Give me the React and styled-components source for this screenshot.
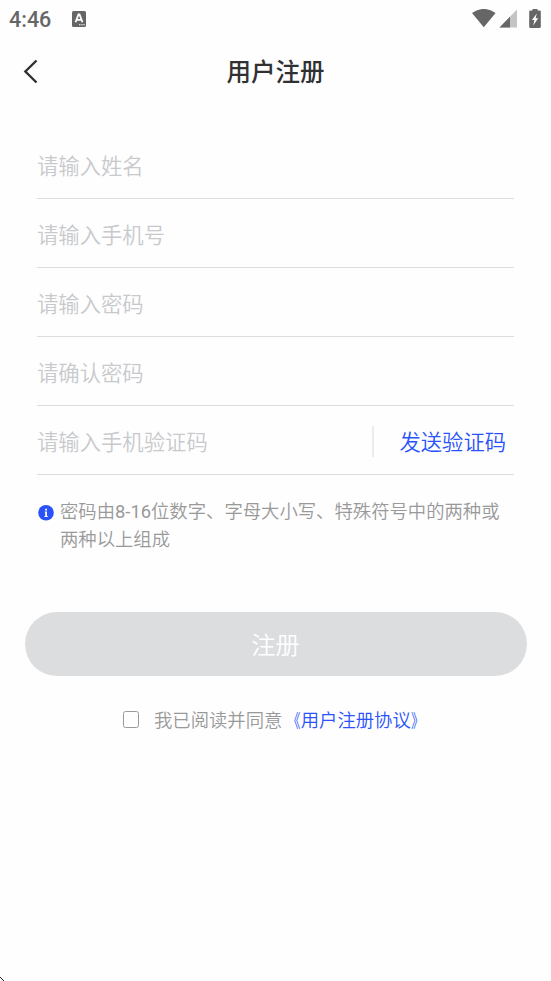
import React, { useState } from "react";
import styled, { createGlobalStyle } from "styled-components";

const Global = createGlobalStyle`
  * { box-sizing: border-box; }
  body {
    margin: 0;
    background: #fefefe;
    font-family: Roboto, "Noto Sans CJK SC", sans-serif;
    font-weight: 350;
  }
  button, input { font: inherit; border: 0; padding: 0; background: none; }
`;

const Screen = styled.main`
  position: relative;
  display: flex;
  flex-direction: column;
  height: 981px;
  width: 551px;
  overflow: hidden;
`;

const StatusBar = styled.header`
  display: flex;
  align-items: center;
  height: 37px;
  padding: 0 10px 0 9px;
  color: #666;
`;

const Clock = styled.time`
  width: 63px;
  font-size: 21.5px;
  font-weight: 500;
  line-height: 37px;
  padding-top: 1px;
`;

const StatusIcons = styled.div`
  display: flex;
  margin-left: auto;
`;

const Icon = styled.svg`
  display: block;
  flex: none;
`;

const NavBar = styled.nav`
  display: grid;
  grid-template-columns: 60px 1fr 60px;
  align-items: center;
  height: 69px;
`;

const BackButton = styled.button`
  padding-left: 22px;
`;

const Title = styled.h1`
  margin: 0;
  padding-top: 3px;
  text-align: center;
  font-size: 24.5px;
  line-height: 36px;
  font-weight: 500;
  color: #303133;
`;

const Form = styled.form`
  display: flex;
  flex-direction: column;
  padding: 24px 37px 0;
`;

const Field = styled.label`
  display: flex;
  align-items: center;
  height: 69px;
  border-bottom: 1px solid #dcdddf;
`;

const Input = styled.input`
  flex: 1;
  min-width: 0;
  height: 40px;
  padding-top: 4px;
  outline: none;
  font-size: 21.35px;
  color: #303133;
  &::placeholder { color: #c8c9cc; opacity: 1; }
`;

const SendCode = styled.button`
  height: 31px;
  margin-top: 3px;
  padding: 2px 8px 0 26px;
  border-left: 2px solid #ebecee;
  font-size: 21.3px;
  line-height: 29px;
  color: #2a52fb;
`;

const Hint = styled.div`
  display: flex;
  gap: 6px;
  padding: 23px 0 0 1px;
  font-size: 18.35px;
  line-height: 27.6px;
  color: #999;
`;

const HintIcon = styled(Icon)`
  margin-top: 7px;
`;

const HintText = styled.p`
  margin: 0;
  white-space: nowrap;
`;

const Digits = styled.span`
  font-weight: 400;
`;

const Submit = styled.button`
  height: 64px;
  margin: 59px 24.5px 0;
  padding-bottom: 2px;
  border-radius: 32px;
  background: #dcdddf;
  color: #fff;
  font-size: 24.3px;
`;

const Agreement = styled.div`
  display: flex;
  align-items: center;
  height: 28px;
  margin: 29px 0 0 123px;
  font-size: 18.35px;
  line-height: 28px;
  color: #999;
`;

const AgreementText = styled.span`
  padding-top: 3px;
`;

const Checkbox = styled.button`
  width: 16px;
  height: 17px;
  margin-right: 15px;
  border: 1px solid #999;
  border-radius: 2.5px;
  background: ${(p) => (p.$checked ? "#2a52fb" : "transparent")};
`;

const AgreementLink = styled.a`
  padding-top: 3px;
  color: #2a52fb;
`;

const Bracket = styled.span`
  display: inline-block;
  transform: scaleX(0.72);
  transform-origin: ${(p) => p.$side} center;
`;

const PointerTip = styled(Icon)`
  position: absolute;
  left: 0;
  bottom: 0;
`;

const fields = ["请输入姓名", "请输入手机号", "请输入密码", "请确认密码"];

export default function App() {
  const [checked, setChecked] = useState(false);
  return (
    <Screen lang="zh-CN">
      <Global />
      <StatusBar>
        <Clock>4:46</Clock>
        <Icon width="14" height="16" viewBox="0 0 14 16">
          <rect width="14" height="16" rx="1.5" fill="#666" />
          <path d="M3.5 11.3 6.5 3.5h1l3 7.8M4.8 8.9h4.4" fill="none" stroke="#fff" strokeWidth="1.8" />
          <path d="M7 13.3h1.4v1H7zm2.2 0h1.4v1H9.2zm2.2 0h1.4v1h-1.4z" fill="#fff" />
        </Icon>
        <StatusIcons>
          <Icon width="69" height="20" viewBox="0 0 69 20">
            <path d="M0 4Q11.8-4.2 23.6 4L11.8 18.2Z" fill="#666" />
            <path d="M45 .5V18.5H27.5Z" fill="#c4c4c4" />
            <path d="M38 7.7V18.5H27.5Z" fill="#666" />
            <path d="M60.5 0h5v1.5h2q1.3 0 1.3 1.3v14.9q0 1.3-1.3 1.3h-9q-1.3 0-1.3-1.3V2.8q0-1.3 1.3-1.3h2Z" fill="#666" />
            <path d="M64.8 4.5 60 11h2.4l-1.2 5.5 5-7.3h-2.6Z" fill="#fff" />
          </Icon>
        </StatusIcons>
      </StatusBar>
      <NavBar>
        <BackButton aria-label="返回">
          <Icon width="18" height="25" viewBox="0 0 18 25">
            <path d="M14.5 1.5 3.4 12.5 14.5 23.5" fill="none" stroke="#303133" strokeWidth="2.4" />
          </Icon>
        </BackButton>
        <Title>用户注册</Title>
      </NavBar>
      <Form onSubmit={(e) => e.preventDefault()}>
        {fields.map((f) => (
          <Field key={f}>
            <Input placeholder={f} />
          </Field>
        ))}
        <Field>
          <Input placeholder="请输入手机验证码" />
          <SendCode type="button">发送验证码</SendCode>
        </Field>
        <Hint>
          <HintIcon width="16" height="16" viewBox="0 0 16 16">
            <circle cx="8" cy="7.8" r="7.8" fill="#2a52fb" />
            <path d="M7.2 3.7H9v1.7H7.2zM6.7 6.5H9V11h.8v1H6.4v-1h.8V7.5h-.5z" fill="#fff" />
          </HintIcon>
          <HintText>
            密码由<Digits>8-16</Digits>位数字、字母大小写、特殊符号中的两种或
            <br />
            两种以上组成
          </HintText>
        </Hint>
      </Form>
      <Submit type="button">注册</Submit>
      <Agreement>
        <Checkbox
          role="checkbox"
          aria-checked={checked}
          aria-label="同意协议"
          $checked={checked}
          onClick={() => setChecked(!checked)}
        />
        <AgreementText>我已阅读并同意</AgreementText>
        <AgreementLink>
          <Bracket $side="right">《</Bracket>用户注册协议<Bracket $side="left">》</Bracket>
        </AgreementLink>
      </Agreement>
      <PointerTip width="4" height="4" viewBox="0 0 4 4">
        <path d="M0 0h1v1H0zM1 1h1v1H1zM2 2h1v1H2zM3 3h1v1H3z" fill="#222" />
      </PointerTip>
    </Screen>
  );
}
